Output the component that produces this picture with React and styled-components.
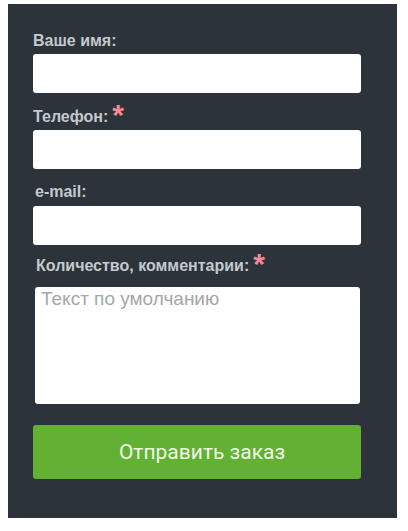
import styled, { createGlobalStyle } from "styled-components";

const GlobalStyle = createGlobalStyle`
  body {
    margin: 0;
    background: #ffffff;
    font-family: "Liberation Sans", Arial, sans-serif;
  }
`;

const Page = styled.div`
  padding: 4px 11px 13px 8px;
`;

const Panel = styled.form`
  background: #2c333a;
  padding: 26px 36px 39px 25px;
  display: flex;
  flex-direction: column;
`;

const Label = styled.label`
  display: flex;
  align-items: flex-start;
  height: 21px;
  padding-left: ${(p) => p.$indent || 0}px;
  margin-top: ${(p) => p.$top || 0}px;
  margin-bottom: ${(p) => p.$bottom || 0}px;
  color: #c3c9cd;
  font-size: 16px;
  font-weight: bold;
  line-height: 21px;
  white-space: nowrap;
`;

const Star = styled.span`
  color: #f58a93;
  font-size: 30px;
  line-height: 30px;
  margin-left: 4px;
  margin-top: -6px;
`;

const Input = styled.input`
  display: block;
  box-sizing: border-box;
  width: 100%;
  height: 39px;
  border: none;
  border-radius: 3px;
  background: #ffffff;
  outline: none;
`;

const TextArea = styled.textarea`
  display: block;
  box-sizing: border-box;
  width: calc(100% - 3px);
  margin-left: 2px;
  height: 117px;
  border: none;
  border-radius: 3px;
  background: #ffffff;
  padding: 1px 6px;
  font-family: "Liberation Sans", Arial, sans-serif;
  font-size: 19px;
  resize: none;
  outline: none;

  &::placeholder {
    color: #a3a7aa;
  }
`;

const Submit = styled.button`
  margin-top: 21px;
  height: 54px;
  border: none;
  border-radius: 3px;
  padding: 0 0 0 10px;
  background: #62b133;
  color: #eef8e6;
  font-family: Roboto, "Liberation Sans", sans-serif;
  font-size: 21px;
  cursor: pointer;
`;

export default function App() {
  return (
    <>
      <GlobalStyle />
      <Page>
        <Panel onSubmit={(e) => e.preventDefault()}>
          <Label $bottom={3}>Ваше имя:</Label>
          <Input type="text" />
          <Label $top={13} $bottom={3}>
            Телефон:<Star>*</Star>
          </Label>
          <Input type="tel" />
          <Label $top={12} $bottom={4} $indent={2}>
            e-mail:
          </Label>
          <Input type="email" />
          <Label $top={10} $bottom={11} $indent={3}>
            Количество, комментарии:<Star>*</Star>
          </Label>
          <TextArea placeholder="Текст по умолчанию" />
          <Submit type="submit">Отправить заказ</Submit>
        </Panel>
      </Page>
    </>
  );
}
